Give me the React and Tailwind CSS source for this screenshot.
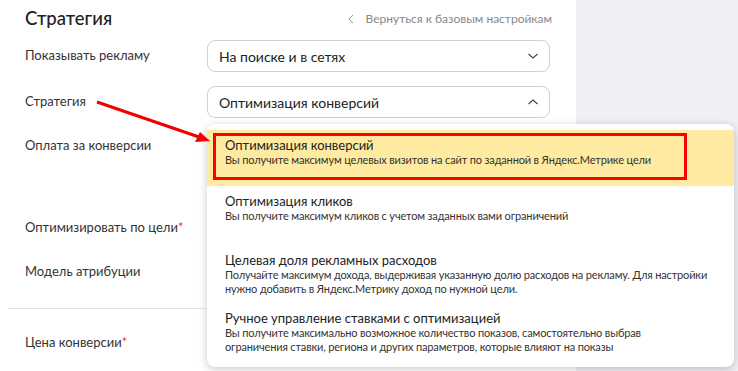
import React from 'react';

const font = { fontFamily: 'Lato, Roboto, "Noto Sans", sans-serif' };

function Chevron({ up }) {
  return (
    <svg width="12" height="8" viewBox="0 0 12 8" className="text-[#444]">
      <polyline
        points={up ? '1.5,6 6,2 10.5,6' : '1.5,2 6,6 10.5,2'}
        fill="none"
        stroke="currentColor"
        strokeWidth="1.1"
      />
    </svg>
  );
}

function Select({ value, up }) {
  return (
    <div className="w-[343px] h-[32px] rounded-lg border border-[#d0d0d0] bg-white flex items-center justify-between pl-[11px] pr-[10px]">
      <span className="text-[14px] text-[#222]">{value}</span>
      <Chevron up={up} />
    </div>
  );
}

function Row({ label, required, children, className = '' }) {
  return (
    <div className={`flex items-center h-[32px] ${className}`}>
      <div className="w-[182px] text-[13px] text-[#333]">
        {label}
        {required && <span className="text-[#f33]">*</span>}
      </div>
      {children}
    </div>
  );
}

const options = [
  {
    title: 'Оптимизация конверсий',
    desc: ['Вы получите максимум целевых визитов на сайт по заданной в Яндекс.Метрике цели'],
    h: 'h-[56px]',
    active: true,
  },
  {
    title: 'Оптимизация кликов',
    desc: ['Вы получите максимум кликов с учетом заданных вами ограничений'],
    h: 'h-[59px]',
  },
  {
    title: 'Целевая доля рекламных расходов',
    desc: [
      'Получайте максимум дохода, выдерживая указанную долю расходов на рекламу. Для настройки',
      'нужно добавить в Яндекс.Метрику доход по нужной цели.',
    ],
    h: 'h-[58px]',
  },
  {
    title: 'Ручное управление ставками с оптимизацией',
    desc: [
      'Вы получите максимально возможное количество показов, самостоятельно выбрав',
      'ограничения ставки, региона и других параметров, которые влияют на показы',
    ],
    h: 'h-[60px]',
  },
];

export default function App() {
  return (
    <div className="relative w-[738px] h-[371px] overflow-hidden flex bg-white" style={font}>
      {/* Main settings panel */}
      <div className="w-[576px] bg-white">
        <div className="flex items-center justify-between h-[40px] pl-[25px] pr-[24px] pb-[2px]">
          <h2 className="text-[18.5px] font-medium text-[#222]">Стратегия</h2>
          <div className="flex items-center gap-[12px] text-[12px] text-[#888]">
            <svg width="6" height="10" viewBox="0 0 6 10">
              <polyline points="5,1 1,5 5,9" fill="none" stroke="#999" strokeWidth="1" />
            </svg>
            <span>Вернуться к базовым настройкам</span>
          </div>
        </div>

        <div className="pl-[25px]">
          <Row label="Показывать рекламу">
            <Select value="На поиске и в сетях" />
          </Row>
          <Row label="Стратегия" className="mt-[14px]">
            <Select value="Оптимизация конверсий" up />
          </Row>
          <Row label="Оплата за конверсии" className="mt-[12px]">
            <div className="w-[343px] h-[32px] rounded-lg border border-[#d0d0d0]" />
          </Row>
          <Row label="Оптимизировать по цели" required className="mt-[50px]">
            <div className="w-[343px] h-[32px] rounded-lg border border-[#d0d0d0]" />
          </Row>
          <Row label="Модель атрибуции" className="mt-[12px]">
            <div className="w-[343px] h-[32px] rounded-lg border border-[#d0d0d0]" />
          </Row>
        </div>
        <div className="ml-[8px] mt-[20px] border-t border-[#e2e2e2]" />
        <div className="pl-[25px]">
          <Row label="Цена конверсии" required className="mt-[18px]">
            <div className="w-[120px] h-[32px] rounded-lg border border-[#d0d0d0]" />
          </Row>
        </div>
      </div>

      {/* Right grey area */}
      <div className="flex-1 bg-[#eef0f5]" />

      {/* Opened strategy menu */}
      <div className="absolute left-[207px] top-[124px] w-[527px] h-[243px] bg-white rounded-lg shadow-[0_2px_8px_rgba(0,0,0,0.22)] pt-[6px] overflow-hidden">
        {options.map((o) => (
          <div
            key={o.title}
            className={`relative ${o.h} pl-[18px] pt-[8px] ${o.active ? 'bg-[#feeaa1]' : ''}`}
          >
            <div className="text-[13px] leading-[15px] text-[#222]">{o.title}</div>
            {o.desc.map((d) => (
              <div key={d} className="text-[11px] leading-[14px] tracking-[-0.15px] text-[#333] whitespace-nowrap">
                {d}
              </div>
            ))}
            {o.active && (
              <div className="absolute left-[6px] top-[3px] w-[474px] h-[47px] border-[3px] border-[#ff0000]" />
            )}
          </div>
        ))}
      </div>

      {/* Annotation arrow */}
      <svg className="absolute left-0 top-0" width="738" height="371">
        <line x1="97" y1="102" x2="199" y2="137" stroke="#f20000" strokeWidth="3" />
        <polygon points="210,141 195,142 200,132" fill="#f20000" />
      </svg>
    </div>
  );
}
